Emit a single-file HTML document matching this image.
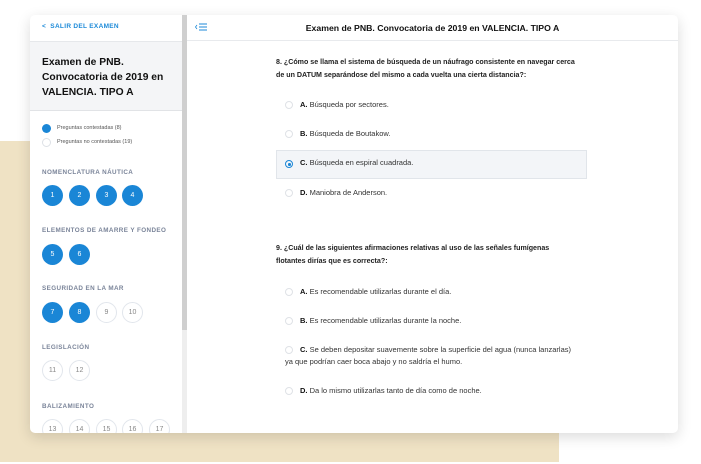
<!DOCTYPE html>
<html><head><meta charset="utf-8"><style>
*{margin:0;padding:0;box-sizing:border-box}
body{width:701px;height:464px;background:#fff;position:relative;overflow:hidden;font-family:"Liberation Sans",sans-serif;color:#222}
.beige{position:absolute;left:0;top:141px;width:559px;height:321px;background:#efe2c4}
.card{position:absolute;left:30px;top:15px;width:648px;height:418px;background:#fff;border-radius:5px;box-shadow:0 4px 14px rgba(0,0,0,.14);overflow:hidden}
.side{position:absolute;left:0;top:0;width:152px;height:418px}
.sb{position:absolute;left:152px;top:0;width:5px;height:418px;background:#eee}
.sb i{position:absolute;left:0;top:0;width:5px;height:315px;background:#cfcfcf}
.a{position:absolute;white-space:nowrap}
.back{left:12px;top:8px;font-size:6.5px;font-weight:bold;color:#1c8ad8;letter-spacing:.3px}
.tbox{position:absolute;left:0;top:26px;width:152px;height:70px;background:#f4f5f7;border-top:1px solid #e6e8eb;border-bottom:1px solid #e1e3e6}
.tt{left:12px;top:40px;font-size:10.3px;font-weight:bold;line-height:15px;color:#111;white-space:normal;width:140px}
.leg{font-size:5.5px;color:#555}
.dot{position:absolute;width:9px;height:9px;border-radius:50%}
.cat{font-size:6.3px;color:#7a8499;letter-spacing:.4px;font-weight:bold}
.c{position:absolute;width:21px;height:21px;border-radius:50%;font-size:7px;text-align:center;line-height:21px}
.f{background:#1a86d6;color:#fff}
.e{border:1px solid #e2e6ec;color:#888;line-height:19px}
.main{position:absolute;left:157px;top:0;right:0;height:418px}
.hdr{position:absolute;left:0;top:0;right:0;height:26px;border-bottom:1px solid #e8eaed;text-align:center;font-size:8.7px;font-weight:bold;line-height:26px;color:#111}
.q{font-size:7.1px;font-weight:bold;line-height:12.5px;color:#222;white-space:normal}
.o{font-size:7.5px;color:#333}
.o b{color:#111}
.r{position:absolute;width:8px;height:8px;border-radius:50%;border:1px solid #dfe2e6}
</style></head><body>
<div class="beige"></div>
<div class="card">
 <div class="side">
  <div class="a back">&lt;&nbsp;&nbsp;SALIR DEL EXAMEN</div>
  <div class="tbox"></div>
  <div class="a tt">Examen de PNB. Convocatoria de 2019 en VALENCIA. TIPO A</div>
  <div class="dot" style="left:12px;top:109px;background:#1a86d6"></div>
  <div class="a leg" style="left:27px;top:110px">Preguntas contestadas (8)</div>
  <div class="dot" style="left:12px;top:123px;border:1px solid #dde1e6"></div>
  <div class="a leg" style="left:27px;top:124px">Preguntas no contestadas (19)</div>
  <div class="a cat" style="left:12px;top:154px">NOMENCLATURA NÁUTICA</div>
  <div class="c f" style="left:12px;top:170px">1</div><div class="c f" style="left:39px;top:170px">2</div><div class="c f" style="left:66px;top:170px">3</div><div class="c f" style="left:92px;top:170px">4</div>
  <div class="a cat" style="left:12px;top:212px">ELEMENTOS DE AMARRE Y FONDEO</div>
  <div class="c f" style="left:12px;top:229px">5</div><div class="c f" style="left:39px;top:229px">6</div>
  <div class="a cat" style="left:12px;top:270px">SEGURIDAD EN LA MAR</div>
  <div class="c f" style="left:12px;top:287px">7</div><div class="c f" style="left:39px;top:287px">8</div><div class="c e" style="left:66px;top:287px">9</div><div class="c e" style="left:92px;top:287px">10</div>
  <div class="a cat" style="left:12px;top:329px">LEGISLACIÓN</div>
  <div class="c e" style="left:12px;top:345px">11</div><div class="c e" style="left:39px;top:345px">12</div>
  <div class="a cat" style="left:12px;top:388px">BALIZAMIENTO</div>
  <div class="c e" style="left:12px;top:404px">13</div><div class="c e" style="left:39px;top:404px">14</div><div class="c e" style="left:66px;top:404px">15</div><div class="c e" style="left:92px;top:404px">16</div><div class="c e" style="left:119px;top:404px">17</div>
 </div>
 <div class="sb"><i></i></div>
 <div class="main">
  <div class="hdr">Examen de PNB. Convocatoria de 2019 en VALENCIA. TIPO A</div>
  <svg style="position:absolute;left:7px;top:7px" width="14" height="10" viewBox="0 0 14 10"><path d="M3 3L1.5 5L3 7" stroke="#1c8ad8" fill="none" stroke-width=".8"/><path d="M5 2H13M5 5H13M5 8H13" stroke="#1c8ad8" stroke-width="1.1"/></svg>
  <div class="a q" style="left:89px;top:41px;width:312px">8. ¿Cómo se llama el sistema de búsqueda de un náufrago consistente en navegar cerca<br>de un DATUM separándose del mismo a cada vuelta una cierta distancia?:</div>
  <div class="r" style="left:98px;top:86px"></div><div class="a o" style="left:113px;top:85px"><b>A.</b> Búsqueda por sectores.</div>
  <div class="r" style="left:98px;top:115px"></div><div class="a o" style="left:113px;top:114px"><b>B.</b> Búsqueda de Boutakow.</div>
  <div style="position:absolute;left:89px;top:135px;width:311px;height:29px;background:#f3f5f8;border:1px solid #e1e5ea"></div>
  <div class="r" style="left:98px;top:145px;border-color:#1a86d6"><div style="position:absolute;left:2px;top:2px;width:2.5px;height:2.5px;border-radius:50%;background:#1a86d6"></div></div><div class="a o" style="left:113px;top:143px"><b>C.</b> Búsqueda en espiral cuadrada.</div>
  <div class="r" style="left:98px;top:174px"></div><div class="a o" style="left:113px;top:173px"><b>D.</b> Maniobra de Anderson.</div>
  <div class="a q" style="left:89px;top:227px;width:300px">9. ¿Cuál de las siguientes afirmaciones relativas al uso de las señales fumígenas<br>flotantes dirías que es correcta?:</div>
  <div class="r" style="left:98px;top:273px"></div><div class="a o" style="left:113px;top:272px"><b>A.</b> Es recomendable utilizarlas durante el día.</div>
  <div class="r" style="left:98px;top:302px"></div><div class="a o" style="left:113px;top:301px"><b>B.</b> Es recomendable utilizarlas durante la noche.</div>
  <div class="r" style="left:98px;top:331px"></div><div class="a o" style="left:113px;top:330px"><b>C.</b> Se deben depositar suavemente sobre la superficie del agua (nunca lanzarlas)</div>
  <div class="a o" style="left:98px;top:342px">ya que podrían caer boca abajo y no saldría el humo.</div>
  <div class="r" style="left:98px;top:372px"></div><div class="a o" style="left:113px;top:371px"><b>D.</b> Da lo mismo utilizarlas tanto de día como de noche.</div>
 </div>
</div>
</body></html>
